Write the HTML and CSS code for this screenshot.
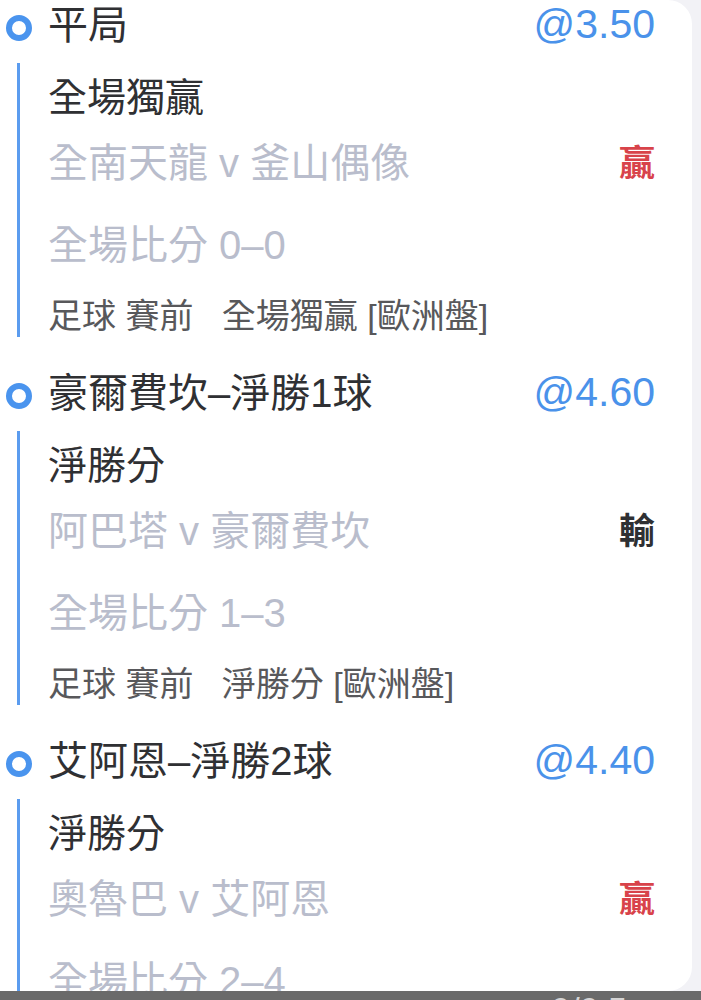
FILE: index.html
```html
<!DOCTYPE html>
<html lang="zh-Hant">
  <head>
    <meta charset="UTF-8" />
    <meta name="viewport" content="width=device-width, initial-scale=1.0" />
    <title>投注紀錄</title>
    <link rel="stylesheet" href="styles.css">
  </head>
  <body>
    <div class="screen">
      <div class="main">
        <div class="card">
          <div class="list">
            <!-- 平局 -->
            <div class="bet">
              <div class="bet-head">
                <span class="dot"></span>
                <span class="bet-name">平局</span>
                <span class="odds">@3.50</span>
              </div>
              <div class="bet-body">
                <div class="row type">全場獨贏</div>
                <div class="row match">
                  <span>全南天龍 v 釜山偶像</span>
                  <span class="result win">贏</span>
                </div>
                <div class="row score">全場比分 0–0</div>
                <div class="row info">足球 賽前&nbsp;&nbsp; 全場獨贏 [歐洲盤]</div>
              </div>
            </div>

            <!-- 豪爾費坎 -->
            <div class="bet">
              <div class="bet-head">
                <span class="dot"></span>
                <span class="bet-name">豪爾費坎–淨勝1球</span>
                <span class="odds">@4.60</span>
              </div>
              <div class="bet-body">
                <div class="row type">淨勝分</div>
                <div class="row match">
                  <span>阿巴塔 v 豪爾費坎</span>
                  <span class="result lose">輸</span>
                </div>
                <div class="row score">全場比分 1–3</div>
                <div class="row info">足球 賽前&nbsp;&nbsp; 淨勝分 [歐洲盤]</div>
              </div>
            </div>

            <!-- 艾阿恩 -->
            <div class="bet">
              <div class="bet-head">
                <span class="dot"></span>
                <span class="bet-name">艾阿恩–淨勝2球</span>
                <span class="odds">@4.40</span>
              </div>
              <div class="bet-body">
                <div class="row type">淨勝分</div>
                <div class="row match">
                  <span>奧魯巴 v 艾阿恩</span>
                  <span class="result win">贏</span>
                </div>
                <div class="row score">全場比分 2–4</div>
                <div class="row info">足球 賽前&nbsp;&nbsp; 淨勝分 [歐洲盤]</div>
              </div>
            </div>
          </div>
        </div>
        <div class="side"></div>
      </div>
      <div class="bottom-bar">
        <span class="bar-text">-0/0.5</span>
      </div>
    </div>
  </body>
</html>
```

FILE: styles.css
```css
/* Global */
body {
  margin: 0;
  background: #f2f2f6;
  font-family: "Liberation Sans", "Noto Sans CJK TC", sans-serif;
}

.screen {
  width: 701px;
  height: 1000px;
  display: flex;
  flex-direction: column;
  overflow: hidden;
}

.main {
  display: flex;
  height: 991px;
}

/* Card */
.card {
  width: 692px;
  height: 991px;
  background: #fff;
  border-radius: 0 24px 24px 0;
  overflow: hidden;
}

.list {
  margin-top: -6px;
  padding-right: 37px;
}

.side {
  flex: 1;
  background: #f2f2f6;
}

/* Bet group */
.bet {
  height: 368px;
}

.bet-head {
  display: flex;
  align-items: center;
  height: 56px;
}

.dot {
  width: 26px;
  height: 26px;
  box-sizing: border-box;
  border: 6px solid #4a94ee;
  border-radius: 50%;
  margin: 11px 0 0 6px;
  flex-shrink: 0;
}

.bet-name {
  margin-left: 16px;
  font-size: 40px;
  color: #2f3033;
  flex: 1;
  white-space: nowrap;
}

.odds {
  margin-top: 5px;
  font-size: 41px;
  color: #4a92ea;
}

.bet-body {
  margin: 13px 0 0 17px;
  padding-left: 28px;
  border-left: 3px solid #5b9cef;
}

.row {
  display: flex;
  align-items: center;
  justify-content: space-between;
  white-space: nowrap;
}

.type {
  height: 62px;
  font-size: 39px;
  color: #2f3033;
}

.match {
  height: 70px;
  font-size: 40px;
  color: #b9bdcc;
}

.score {
  height: 94px;
  font-size: 40px;
  color: #b9bdcc;
}

.info {
  height: 48px;
  font-size: 34px;
  color: #58585b;
}

.result {
  font-size: 36px;
  font-weight: bold;
}

.result.win {
  color: #d8434a;
}

.result.lose {
  color: #2f3033;
}

/* Bottom bar */
.bottom-bar {
  height: 9px;
  background: #6a6a6a;
  overflow: hidden;
}

.bar-text {
  display: block;
  margin: -2px 0 0 540px;
  font-size: 34px;
  line-height: 40px;
  color: #d4d4d4;
}
```
